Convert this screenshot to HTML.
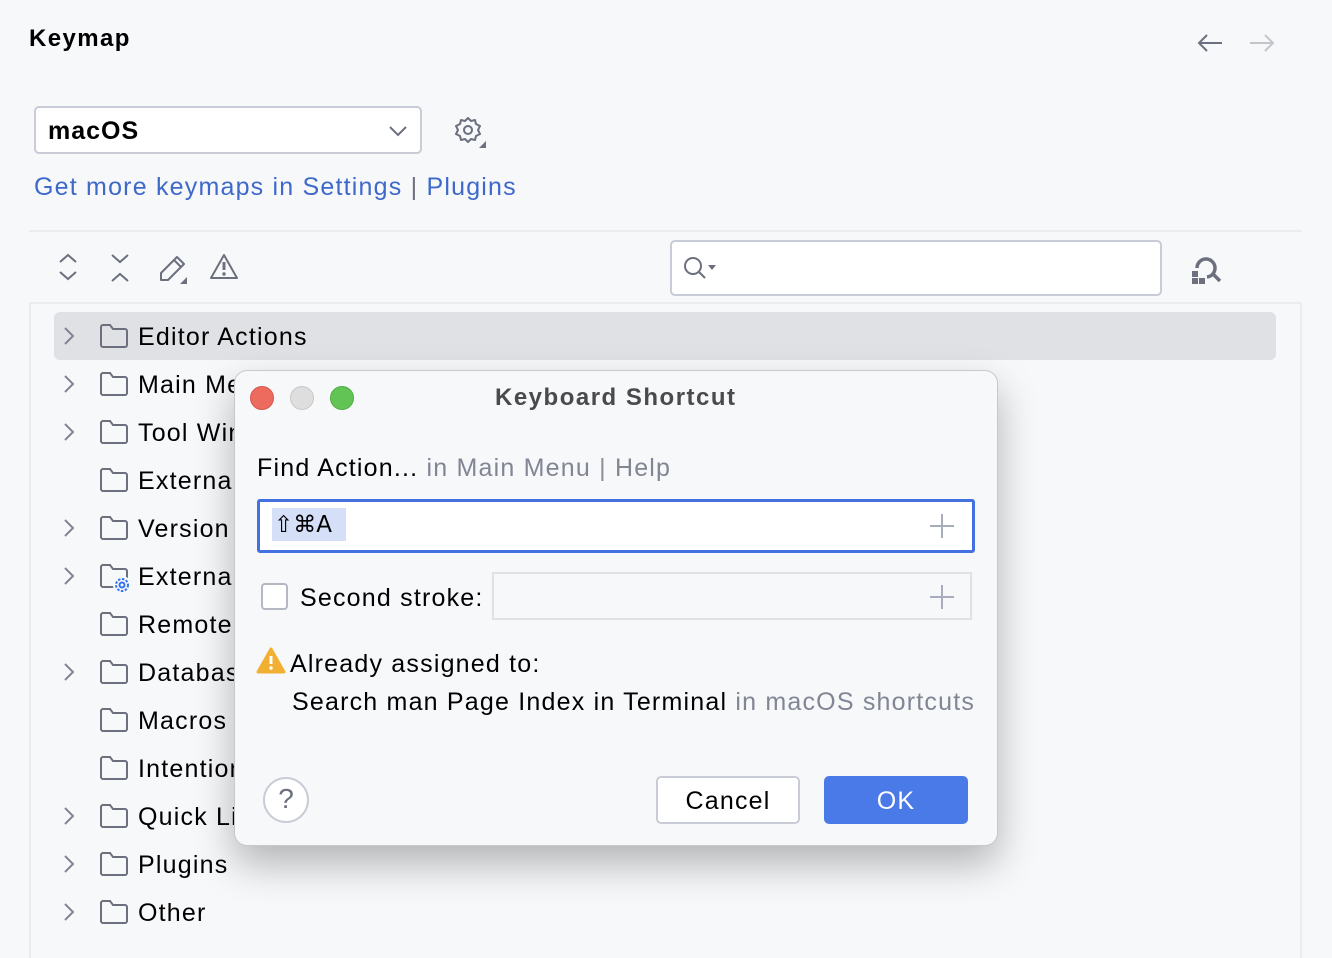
<!DOCTYPE html>
<html><head><meta charset="utf-8"><style>
*{margin:0;padding:0;box-sizing:border-box}
html,body{width:1332px;height:958px;overflow:hidden}
body{background:#f7f8fa;font-family:"Liberation Sans",sans-serif;position:relative;color:#000;letter-spacing:1.2px}
.a{position:absolute}
.t{font-size:25px;white-space:nowrap;line-height:30px}
svg{position:absolute;overflow:visible}
</style></head><body>
<div class="a t" style="left:29px;top:24px;font-weight:bold;font-size:24px;letter-spacing:1.4px">Keymap</div>
<svg style="left:1197px;top:33px" width="26" height="20"><path d="M25 10H2M10 2L2 10l8 8" fill="none" stroke="#6c707e" stroke-width="2"/></svg>
<svg style="left:1249px;top:33px" width="26" height="20"><path d="M1 10h23M16 2l8 8-8 8" fill="none" stroke="#c3c5cb" stroke-width="2"/></svg>

<div class="a" style="left:34px;top:106px;width:388px;height:48px;background:#fff;border:2px solid #c9ccd6;border-radius:5px"></div>
<div class="a t" style="left:48px;top:116px;font-weight:bold;font-size:25px;letter-spacing:1px">macOS</div>
<svg style="left:389px;top:126px" width="18" height="10"><path d="M1 1l8 8 8-8" fill="none" stroke="#6c707e" stroke-width="2"/></svg>
<svg style="left:454px;top:116px" width="34" height="32"><circle cx="14" cy="14" r="4" fill="none" stroke="#6c707e" stroke-width="2"/><path d="M14 2l3 3 4-1 1 4 4 2-2 4 2 4-4 2-1 4-4-1-3 3-3-3-4 1-1-4-4-2 2-4-2-4 4-2 1-4 4 1z" fill="none" stroke="#6c707e" stroke-width="2" stroke-linejoin="round"/><path d="M32 25v7h-7z" fill="#6c707e"/></svg>
<div class="a t" style="left:34px;top:172px;color:#3e68c9">Get more keymaps in Settings <span style="color:#6c707e">|</span> Plugins</div>

<div class="a" style="left:29px;top:230px;width:1273px;height:2px;background:#ebecf0"></div>
<svg style="left:58px;top:254px" width="20" height="28"><path d="M2 8l8-7 8 7M2 18l8 7 8-7" fill="none" stroke="#6c707e" stroke-width="2"/></svg>
<svg style="left:110px;top:254px" width="20" height="28"><path d="M2 1l8 7 8-7M2 27l8-7 8 7" fill="none" stroke="#6c707e" stroke-width="2"/></svg>
<svg style="left:159px;top:254px" width="30" height="30"><path d="M2 26v-7L18 3l7 7L9 26z M15 6l7 7" fill="none" stroke="#6c707e" stroke-width="2" stroke-linejoin="round"/><path d="M28 23v7h-7z" fill="#6c707e"/></svg>
<svg style="left:209px;top:253px" width="30" height="28"><path d="M15 2L28 25H2z" fill="none" stroke="#6c707e" stroke-width="2" stroke-linejoin="round"/><path d="M15 9v8" stroke="#6c707e" stroke-width="3"/><circle cx="15" cy="21" r="1.7" fill="#6c707e"/></svg>

<div class="a" style="left:670px;top:240px;width:492px;height:56px;background:#fff;border:2px solid #c9ccd6;border-radius:5px"></div>
<svg style="left:683px;top:256px" width="36" height="26"><circle cx="10" cy="10" r="8" fill="none" stroke="#6c707e" stroke-width="2"/><path d="M16 16l6 6" stroke="#6c707e" stroke-width="2"/><path d="M25 9h8l-4 5z" fill="#6c707e"/></svg>
<svg style="left:1191px;top:254px" width="34" height="30"><path d="M6 14a9 9 0 1 1 10 9M22 20l7 7" fill="none" stroke="#6c707e" stroke-width="3.5"/><rect x="1" y="17" width="6" height="6" fill="#6c707e"/><rect x="1" y="24" width="6" height="6" fill="#6c707e"/><rect x="8" y="24" width="6" height="6" fill="#6c707e"/></svg>
<div class="a" style="left:29px;top:302px;width:1273px;height:700px;border:2px solid #ebecf0;border-bottom:none"></div>

<div class="a" style="left:54px;top:312px;width:1222px;height:48px;background:#dfe1e5;border-radius:6px"></div>
<div id="tree"></div>

<div class="a" style="left:234px;top:370px;width:764px;height:476px;background:#f7f8fa;border:1px solid #c6c8cd;border-radius:13px;box-shadow:0 18px 40px rgba(0,0,0,.28)"></div>
<div class="a" style="left:250px;top:386px;width:24px;height:24px;border-radius:50%;background:#ec6a5e;border:1px solid #d5574b"></div>
<div class="a" style="left:290px;top:386px;width:24px;height:24px;border-radius:50%;background:#dedede;border:1px solid #c8c8c8"></div>
<div class="a" style="left:330px;top:386px;width:24px;height:24px;border-radius:50%;background:#61c454;border:1px solid #4fae42"></div>
<div class="a t" style="left:495px;top:383px;font-weight:bold;font-size:24px;color:#4a4a4a;letter-spacing:1.5px">Keyboard Shortcut</div>
<div class="a t" style="left:257px;top:453px">Find Action... <span style="color:#818594">in Main Menu <span style="color:#8c8f99">|</span> Help</span></div>
<div class="a" style="left:257px;top:499px;width:718px;height:54px;background:#fff;border:3px solid #4371e0;border-radius:3px"></div>
<div class="a" style="left:272px;top:508px;width:74px;height:33px;background:#d5e0f8"></div>
<div class="a t" style="left:274px;top:510px;font-family:'DejaVu Sans','Liberation Sans',sans-serif;font-size:23px;letter-spacing:0">⇧⌘A</div>
<svg style="left:930px;top:514px" width="24" height="24"><path d="M12 0v24M0 12h24" stroke="#a8adbd" stroke-width="2"/></svg>
<div class="a" style="left:261px;top:583px;width:27px;height:27px;background:#fff;border:2px solid #b4b8c2;border-radius:4px"></div>
<div class="a t" style="left:300px;top:583px">Second stroke:</div>
<div class="a" style="left:492px;top:572px;width:480px;height:48px;border:2px solid #dfe1e5"></div>
<svg style="left:930px;top:585px" width="24" height="24"><path d="M12 0v24M0 12h24" stroke="#a8adbd" stroke-width="2"/></svg>
<svg style="left:256px;top:647px" width="30" height="28"><path d="M15 2L28 25H2z" fill="#f2b033" stroke="#f2b033" stroke-width="3" stroke-linejoin="round"/><path d="M15 9v8" stroke="#fff" stroke-width="3"/><circle cx="15" cy="21" r="1.7" fill="#fff"/></svg>
<div class="a t" style="left:290px;top:649px">Already assigned to:</div>
<div class="a t" style="left:292px;top:687px">Search man Page Index in Terminal <span style="color:#818594">in macOS shortcuts</span></div>
<div class="a" style="left:263px;top:777px;width:46px;height:46px;border-radius:50%;background:#fff;border:2px solid #c9ccd6;text-align:center;font-size:28px;line-height:40px;color:#6c707e;letter-spacing:0">?</div>
<div class="a" style="left:656px;top:776px;width:144px;height:48px;background:#fff;border:2px solid #c9ccd6;border-radius:5px;text-align:center;font-size:25px;line-height:46px">Cancel</div>
<div class="a" style="left:824px;top:776px;width:144px;height:48px;background:#4a7ae8;border-radius:5px;text-align:center;font-size:25px;line-height:50px;color:#fff">OK</div>

<script>
var items=[["Editor Actions",1],["Main Menu",1],["Tool Windows",1],["External Tools",0],["Version Control",1],["External Build",1,1],["Remote",0],["Database",1],["Macros",0],["Intentions",0],["Quick Lists",1],["Plugins",1],["Other",1]];
var h="";
items.forEach(function(it,i){var c=336+48*i;
if(it[1])h+='<svg style="left:63px;top:'+(c-9)+'px" width="12" height="18"><path d="M2 1l8 8-8 8" fill="none" stroke="#818594" stroke-width="2"/></svg>';
h+='<svg style="left:100px;top:'+(c-12)+'px" width="28" height="24"><path d="M1 3a2 2 0 0 1 2-2h7l3 4h12a2 2 0 0 1 2 2v14a2 2 0 0 1-2 2H3a2 2 0 0 1-2-2z" fill="none" stroke="#6c707e" stroke-width="2"/></svg>';
if(it[2])h+='<svg style="left:112px;top:'+(c-1)+'px" width="20" height="20"><circle cx="10" cy="10" r="9" fill="#f7f8fa"/><circle cx="10" cy="10" r="2.5" fill="none" stroke="#3574f0" stroke-width="2"/><circle cx="10" cy="10" r="6" fill="none" stroke="#3574f0" stroke-width="2" stroke-dasharray="2.5 1.5"/></svg>';
h+='<div class="a t" style="left:138px;top:'+(c-14)+'px">'+it[0]+'</div>';});
document.getElementById("tree").outerHTML=h;
</script>
</body></html>
